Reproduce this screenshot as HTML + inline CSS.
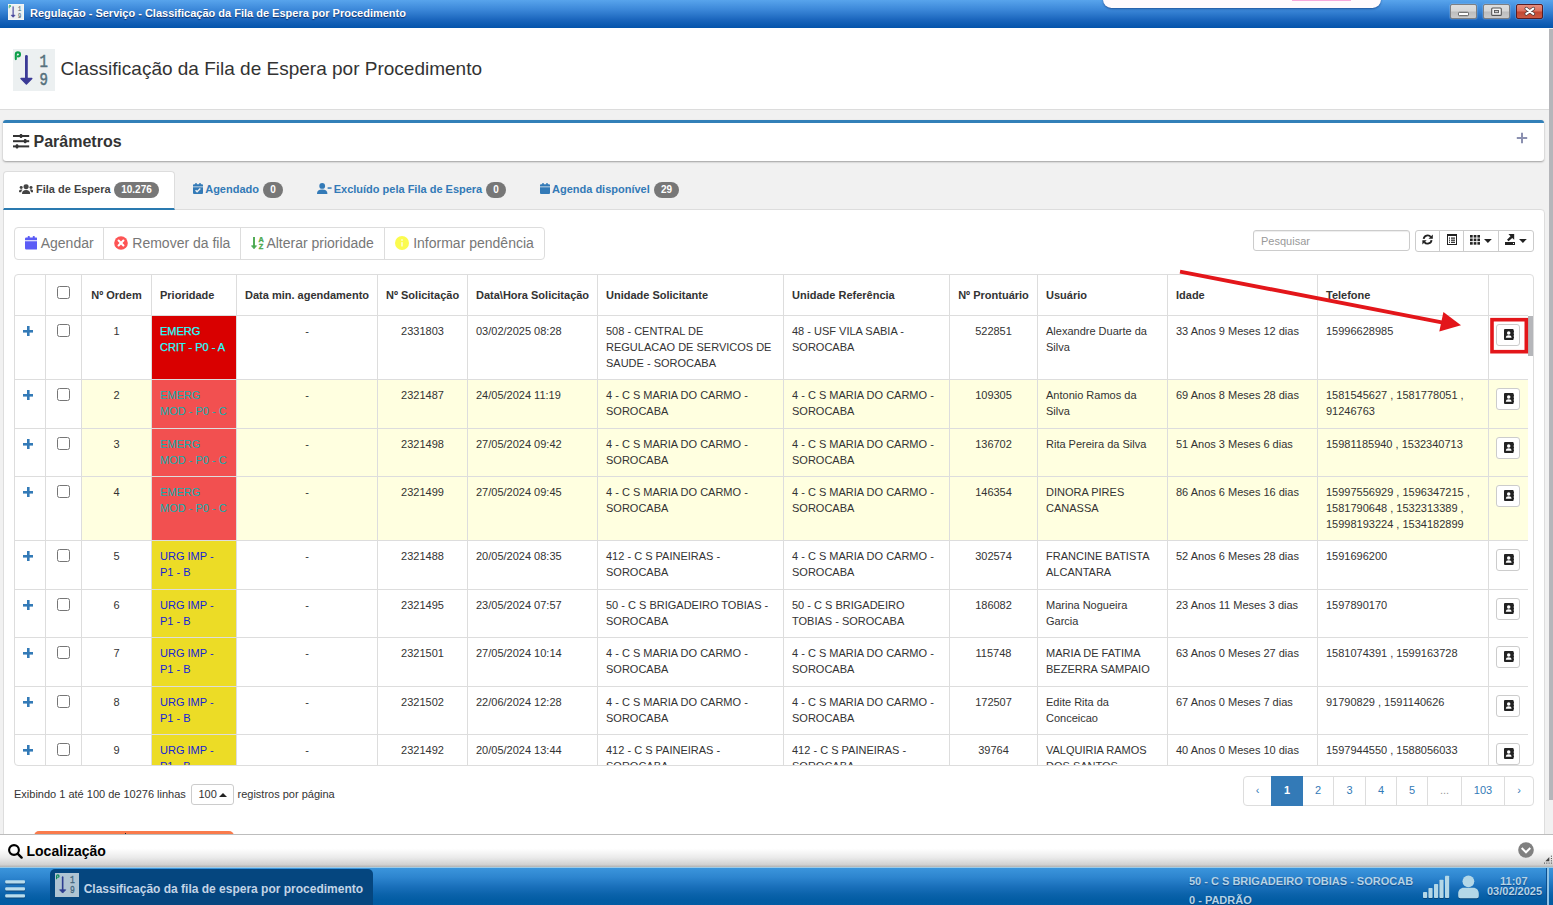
<!DOCTYPE html>
<html lang="pt-BR">
<head>
<meta charset="utf-8">
<title>Regulação - Serviço - Classificação da Fila de Espera por Procedimento</title>
<style>
*{box-sizing:border-box;}
html,body{margin:0;padding:0;}
body{width:1553px;height:905px;overflow:hidden;position:relative;background:#f1f1f1;font-family:"Liberation Sans",Arial,sans-serif;font-size:11px;line-height:1.42857;color:#333;}
.abs{position:absolute;}
i{font-style:normal;display:inline-block;}
/* window title bar */
#titlebar{left:0;top:0;width:1553px;height:28px;background:linear-gradient(#58a4ec 0%,#3b87d8 35%,#1b66bd 70%,#0454ab 100%);}
#titlebar .ttl{left:30px;top:6px;color:#fff;font-weight:bold;font-size:11px;line-height:14px;text-shadow:0 1px 1px rgba(0,0,40,.6);white-space:nowrap;}
.wbtn{top:4.200px;width:27px;height:14.500px;border:1px solid #7d7f83;border-radius:2px;background:linear-gradient(#dedede 0%,#d6d6d6 48%,#bdbdbd 52%,#cacaca 100%);box-shadow:0 0 0 .6px rgba(255,255,255,.22);}
.wbtn.close{border-color:#5a1c22;background:linear-gradient(#e58e7e 0%,#db705d 48%,#c2452f 52%,#cb5a44 100%);}
/* page header */
#header{left:0;top:28px;width:1549px;height:82px;background:#fff;border-bottom:1px solid #dcdcdc;}
#header h1{position:absolute;left:60.6px;top:29px;margin:0;font-weight:normal;font-size:19px;line-height:24px;color:#333;white-space:nowrap;}
#hicon{left:13px;top:21px;width:42px;height:42px;background:#ecf0f1;}
#vscroll{left:1549px;top:29px;width:4px;height:771px;background:#b5b6ba;}
/* parametros panel */
#params{left:3px;top:120px;width:1541px;height:41px;background:#fff;border-top:3px solid #3280b8;border-radius:3px;box-shadow:0 1px 2px rgba(0,0,0,.35);}
#params .t{left:30.500px;top:9px;font-size:16px;font-weight:bold;line-height:20px;color:#333;}
#params .pl{left:1512px;top:4px;font-size:18px;line-height:20px;color:#8a8fb5;}
/* tabs */
.tab{z-index:2;top:171px;height:39px;font-size:11px;font-weight:bold;color:#337ab7;white-space:nowrap;line-height:16px;padding-top:11px;}
.tab.active{left:3px;width:172px;background:#fff;border:1px solid #ddd;border-bottom:2px solid #2a7ab0;border-radius:4px 4px 0 0;color:#444;padding-top:9px;}
.badge{position:absolute;top:11px;height:16px;background:#777;color:#fff;border-radius:8px;font-size:10px;font-weight:bold;line-height:16px;text-align:center;}
.tab svg{position:absolute;}
.tab span.l{position:absolute;top:10px;}
/* content */
#content{left:3px;top:209px;width:1542px;height:626px;background:#fff;border:1px solid #ddd;border-radius:0 4px 0 0;}
/* toolbar */
#tb{left:14px;top:227px;width:531px;height:33px;border:1px solid #ddd;border-radius:4px;background:#fff;}
#tb span{position:absolute;top:0;height:31px;font-size:14px;line-height:30px;color:#777;white-space:nowrap;}
#tb b{position:absolute;top:0;width:1px;height:31px;background:#ddd;}
#tb svg{position:absolute;}
#search{left:1253px;top:230px;width:157px;height:21px;border:1px solid #ccc;border-radius:3px;box-shadow:inset 0 1px 1px rgba(0,0,0,.075);font-size:11px;line-height:20px;color:#999;padding-left:7px;background:#fff;}
#tools{left:1415px;top:230px;width:119px;height:22px;border:1px solid #ccc;border-radius:3px;background:#fff;}
#tools b{position:absolute;top:0;width:1px;height:20px;background:#ccc;}
#tools svg{position:absolute;}
/* table */
#tw{left:14px;top:274px;width:1520px;height:492px;border:1px solid #ddd;border-radius:4px;overflow:hidden;background:#fff;}
table{border-collapse:separate;border-spacing:0;table-layout:fixed;width:1513px;position:absolute;left:0;top:0;}
th,td{border-left:1px solid #ddd;border-top:1px solid #ddd;padding:7px 8px 5px;line-height:16px;vertical-align:top;text-align:left;overflow:hidden;}
th:first-child,td:first-child{border-left:0;}
thead th{border-top:0;height:40px;font-weight:bold;padding:0 8px;line-height:40px;white-space:nowrap;vertical-align:middle;}
td.c,th.c{text-align:center;}
tr.y td{background:#ffffe0;}
tr.y td.w{background:#fff;}
td.p0a{background:#d90000 !important;color:#2ff;-webkit-text-stroke:.250px #2ff;}
td.p0c{background:#f25050 !important;color:#0dafaf;}
td.p1b{background:#ecdc26 !important;color:#1323d9;}
td.b{padding:8px 0 0 7px;}
.ab{width:24px;height:22px;border:1px solid #ccc;border-radius:3px;background:#fff;position:relative;}
.ab svg{position:absolute;left:6.500px;top:4px;}
.cb{width:13px;height:13px;border:1px solid #767676;border-radius:2.500px;background:#fff;position:relative;top:1px;}
.plus{width:10px;height:10px;position:relative;top:1.3px;background:linear-gradient(#337ab7,#337ab7) center/10px 2.6px no-repeat,linear-gradient(#337ab7,#337ab7) center/2.6px 10px no-repeat;}
/* footer */
#finfo{left:14px;top:785.5px;font-size:11px;line-height:16px;white-space:nowrap;}
#psize{left:191px;top:784px;width:43px;height:21px;border:1px solid #ccc;border-radius:3px;background:#fff;font-size:11px;line-height:19px;padding-left:6.500px;}
#finfo2{left:237.5px;top:785.5px;font-size:11px;line-height:16px;white-space:nowrap;}
#pag{left:1243px;top:776px;height:30px;display:flex;border:1px solid #ddd;border-radius:4px;background:#fff;}
#pag div{height:28px;line-height:27px;text-align:center;color:#337ab7;font-size:11px;}
#pag div.br{border-right:1px solid #ddd;}
#pag div.on{background:#337ab7;color:#fff;font-weight:bold;height:30px;margin-top:-1px;line-height:29px;}
#orange{left:33.5px;top:830.6px;width:200.5px;height:10px;background:#f97b4c;border-radius:5px 5px 0 0;}
/* localizacao */
#loc{left:0;top:834px;width:1553px;height:33px;border-top:1px solid #bdbdbd;background:linear-gradient(#fff 0%,#fff 42%,#ebebeb 70%,#d2d2d2 92%,#b2b2b2 100%);}
#loc .t{left:26.5px;top:8.3px;font-size:14px;font-weight:bold;line-height:16px;color:#000;}
#loc svg{position:absolute;}
/* taskbar */
#task{left:0;top:867px;width:1553px;height:38px;background:linear-gradient(#3b95dc 0%,#2d85cf 25%,#1a70bb 50%,#0a62aa 72%,#025ca3 88%,#015ba2 100%);border-top:1px solid #9ccbe8;overflow:hidden;}
#task svg{position:absolute;}
#task .r{color:#b5d3e6;font-size:11px;font-weight:bold;white-space:nowrap;line-height:14px;text-shadow:0 1px 1px rgba(0,30,80,.5);}
#tbtn{left:50px;top:1px;width:323px;height:40px;background:#05467f;border-radius:5px;}
#tbtn .t{left:33.7px;top:12px;color:#c3d4e6;font-size:12px;font-weight:bold;line-height:16px;white-space:nowrap;}
</style>
</head>
<body>
<svg width="0" height="0" style="position:absolute"><defs>
<g id="abk"><path d="M1 0h7.6a1 1 0 0 1 1 1v9a1 1 0 0 1-1 1H1a1 1 0 0 1-1-1V1a1 1 0 0 1 1-1z" fill="#222"/><circle cx="4.7" cy="3.9" r="1.75" fill="#fff"/><path d="M1.8 8.7c0-1.7 1.2-2.5 2.9-2.5s2.9.8 2.9 2.5z" fill="#fff"/><rect x="9.1" y="1.6" width="1.2" height="1.9" rx=".4" fill="#222"/><rect x="9.1" y="4.5" width="1.2" height="1.9" rx=".4" fill="#222"/><rect x="9.1" y="7.4" width="1.2" height="1.9" rx=".4" fill="#222"/></g>
<g id="s19"><rect width="42" height="42" fill="#ecf0f1"/><path d="M2.800 10.100V5.500a2.100 2.100 0 0 1 4.200 0c0 1.200-.8 1.900-2 1.900" fill="none" stroke="#0c9f49" stroke-width="2.1" stroke-linecap="round" stroke-linejoin="round"/><path d="M13.4 7.300V30" stroke="#3b3a96" stroke-width="2.800" stroke-linecap="round"/><path d="M8 29.400h10.800l-5.400 5.700z" fill="#3b3a96" stroke="#3b3a96" stroke-width="1.400" stroke-linejoin="round"/><g transform="matrix(.8 0 0 1 6.1 0)" font-family="Liberation Mono, monospace" font-size="17.500" fill="#56707c" stroke="#56707c" stroke-width=".550" text-anchor="middle"><text x="30.600" y="17.700">1</text><text x="30.600" y="35.800">9</text></g></g>
<g id="cal"><path d="M0 3.4V2.2a1 1 0 0 1 1-1h1.2V.5a.5.5 0 0 1 .5-.5h.6a.5.5 0 0 1 .5.5v.7h2.4V.5a.5.5 0 0 1 .5-.5h.6a.5.5 0 0 1 .5.5v.7H9a1 1 0 0 1 1 1v1.2zM0 4.2h10V10a1 1 0 0 1-1 1H1a1 1 0 0 1-1-1z"/></g>
</defs></svg>
<div id="titlebar" class="abs">
  <svg class="abs" style="left:8px;top:4px" width="16" height="16" viewBox="0 0 42 42"><use href="#s19"/><rect x=".8" y=".8" width="40.4" height="40.4" fill="none" stroke="#fff" stroke-opacity=".55" stroke-width="1.6"/></svg>
  <div class="ttl abs">Regulação - Serviço - Classificação da Fila de Espera por Procedimento</div>
  <div class="abs" style="left:1103px;top:-9px;width:278px;height:17px;border-radius:9px;background:#fffafd;box-shadow:0 1px 2px rgba(0,20,80,.45)"></div>
  <div class="abs" style="left:1292px;top:0;width:59px;height:1px;background:#f8a9dc"></div>
  <div class="wbtn abs" style="left:1450.200px"><svg class="abs" style="left:0;top:0" width="26" height="13" viewBox="0 0 26 13"><rect x="7.5" y="7.3" width="10" height="3.4" rx="1" fill="#fff" stroke="#555" stroke-width="1"/></svg></div>
  <div class="wbtn abs" style="left:1483.200px"><svg class="abs" style="left:0;top:0" width="26" height="13" viewBox="0 0 26 13"><rect x="7.7" y="3" width="9.6" height="7.4" rx="1" fill="#f4f4f4" stroke="#555" stroke-width="1.1"/><rect x="10.5" y="5.5" width="4" height="2.2" fill="#ccc" stroke="#555" stroke-width=".9"/></svg></div>
  <div class="wbtn close abs" style="left:1516.400px"><svg class="abs" style="left:0;top:0" width="26" height="13" viewBox="0 0 26 13"><path d="M9.3 3.700l7 5.200M16.300 3.700l-7 5.200" stroke="#4a3a3a" stroke-width="3.500" stroke-linecap="round"/><path d="M9.300 3.700l7 5.200M16.300 3.700l-7 5.200" stroke="#fff" stroke-width="2.100" stroke-linecap="round"/></svg></div>
</div>
<div id="header" class="abs">
  <svg id="hicon" class="abs" width="42" height="42" viewBox="0 0 42 42"><use href="#s19"/></svg>
  <h1>Classificação da Fila de Espera por Procedimento</h1>
</div>
<div id="vscroll" class="abs"></div>
<div id="params" class="abs">
  <svg class="abs" style="left:10px;top:10px" width="17" height="16" viewBox="0 0 17 16"><g fill="#333"><rect x="0" y="2" width="16.2" height="2"/><rect x="0" y="7.2" width="16.2" height="2"/><rect x="0" y="12.4" width="16.2" height="2"/><rect x="6.700" y=".9" width="2.600" height="4.200" rx="1"/><rect x="10.900" y="6.100" width="2.600" height="4.200" rx="1"/><rect x="2.700" y="11.300" width="2.600" height="4.200" rx="1"/></g></svg>
  <div class="t abs">Parâmetros</div>
  <svg class="abs" style="left:1512.600px;top:9.300px" width="12" height="12" viewBox="0 0 12 12"><path d="M6 .8v10.400M.8 6h10.400" stroke="#8b90b0" stroke-width="2"/></svg>
</div>
<div class="tab active abs">
  <svg style="left:15px;top:12px" width="14.200" height="10" viewBox="0 0 15 11" preserveAspectRatio="none"><g fill="#444"><circle cx="7.5" cy="3" r="2.7"/><path d="M3.2 10.6c0-2.6 1.6-4 4.3-4s4.3 1.4 4.3 4a.4.4 0 0 1-.4.4H3.6a.4.4 0 0 1-.4-.4z"/><circle cx="2.3" cy="3.9" r="1.6"/><circle cx="12.7" cy="3.9" r="1.6"/><path d="M0 8.3c0-1.4.8-2.3 2.3-2.3.6 0 1.100.1 1.500.4-.9.700-1.4 1.600-1.5 2.600H.4a.4.4 0 0 1-.4-.4z"/><path d="M15 8.300c0-1.400-.8-2.300-2.300-2.300-.6 0-1.100.1-1.500.4.9.7 1.4 1.6 1.5 2.600h1.900a.4.4 0 0 0 .4-.4z"/></g></svg>
  <span class="l" style="left:32px;top:9px">Fila de Espera</span><span class="badge" style="left:110px;width:45px;top:10px">10.276</span>
</div>
<div class="tab abs" style="left:0;width:700px;pointer-events:none">
  <svg style="left:193px;top:12px" width="10" height="11" viewBox="0 0 10 11" fill="#337ab7"><use href="#cal"/><path d="M2.6 7.200l1.5 1.5 3.200-3.1" fill="none" stroke="#f1f1f1" stroke-width="1.4"/></svg>
  <span class="l" style="left:205.200px;top:10px">Agendado</span><span class="badge" style="left:263px;width:20px">0</span>
  <svg style="left:317px;top:12px" width="15" height="11" viewBox="0 0 15 11" fill="#337ab7"><circle cx="5.2" cy="2.9" r="2.9"/><path d="M0 10.500c0-2.8 1.800-4.1 5.200-4.100s5.2 1.3 5.2 4.100a.500.5 0 0 1-.5.500H.5a.5.5 0 0 1-.5-.5z"/><rect x="10.6" y="4.3" width="4" height="1.5"/></svg>
  <span class="l" style="left:333.700px;top:10px">Excluído pela Fila de Espera</span><span class="badge" style="left:486px;width:20px">0</span>
  <svg style="left:539.500px;top:12px" width="10" height="11" viewBox="0 0 10 11" fill="#337ab7"><use href="#cal"/></svg>
  <span class="l" style="left:552px;top:10px">Agenda disponível</span><span class="badge" style="left:654px;width:25px">29</span>
</div>
<div id="content" class="abs"></div>
<div id="tb" class="abs">
  <svg style="left:9.800px;top:8.300px" width="12.500" height="13.500" viewBox="0 0 10 11" fill="#5b5cf6" preserveAspectRatio="none"><use href="#cal"/></svg>
  <span style="left:25.700px">Agendar</span><b style="left:88px"></b>
  <svg style="left:99.400px;top:7.800px" width="14" height="14" viewBox="0 0 14 14"><circle cx="7" cy="7" r="6.800" fill="#fd5454"/><path d="M4.6 4.600l4.8 4.800M9.4 4.600l-4.8 4.8" stroke="#fff" stroke-width="2.1" stroke-linecap="round"/></svg>
  <span style="left:117.300px">Remover da fila</span><b style="left:225px"></b>
  <svg style="left:236px;top:8.500px" width="14" height="13" viewBox="0 0 14 13"><path d="M3 .6v9" stroke="#4aa84f" stroke-width="1.900" stroke-linecap="round"/><path d="M.5 8.800h5l-2.500 3z" fill="#4aa84f" stroke="#4aa84f" stroke-width=".800" stroke-linejoin="round"/><text x="10.050" y="5.300" text-anchor="middle" font-family="Liberation Sans, sans-serif" font-weight="bold" font-size="7.300" fill="#4aa84f" stroke="#4aa84f" stroke-width=".350">A</text><text x="10" y="12.300" text-anchor="middle" font-family="Liberation Sans, sans-serif" font-weight="bold" font-size="7.300" fill="#4aa84f" stroke="#4aa84f" stroke-width=".350">Z</text></svg>
  <span style="left:251.400px">Alterar prioridade</span><b style="left:369px"></b>
  <svg style="left:380px;top:7.800px" width="14" height="14" viewBox="0 0 14 14"><circle cx="7" cy="7" r="7" fill="#fbfb4e"/><circle cx="7" cy="3.9" r="1" fill="#fdfdc0"/><rect x="6.1" y="5.9" width="1.8" height="4.6" rx=".6" fill="#fdfdc0"/></svg>
  <span style="left:398.200px">Informar pendência</span>
</div>
<div id="search" class="abs">Pesquisar</div>
<div id="tools" class="abs">
  <svg style="left:6px;top:3px" width="11.2" height="11" viewBox="0 0 12 12"><path d="M1.7 5.400A4.400 4.400 0 0 1 9.500 3.100M10.300 6.600A4.400 4.400 0 0 1 2.500 8.900" fill="none" stroke="#222" stroke-width="2"/><path d="M11.700.500v4.700H7zM.300 11.500V6.800H5z" fill="#222"/></svg>
  <b style="left:23px"></b>
  <svg style="left:31px;top:3px" width="10" height="11" viewBox="0 0 10 11"><rect x=".5" y=".5" width="9" height="10" fill="#fff" stroke="#222" stroke-width="1"/><rect x="0" y="0" width="10" height="2" fill="#222"/><g fill="#222"><rect x="2" y="3.500" width="1" height="1.200"/><rect x="4" y="3.500" width="4" height="1.200"/><rect x="2" y="5.600" width="1" height="1.200"/><rect x="4" y="5.600" width="4" height="1.200"/><rect x="2" y="7.700" width="1" height="1.200"/><rect x="4" y="7.700" width="4" height="1.200"/></g></svg>
  <b style="left:47px"></b>
  <svg style="left:54px;top:4.200px" width="10.100" height="9.700" viewBox="0 0 10.100 9.700" fill="#222"><rect x="0" y="0" width="2.700" height="2.600"/><rect x="3.700" y="0" width="2.700" height="2.600"/><rect x="7.400" y="0" width="2.700" height="2.600"/><rect x="0" y="3.550" width="2.700" height="2.600"/><rect x="3.700" y="3.550" width="2.700" height="2.600"/><rect x="7.400" y="3.550" width="2.700" height="2.600"/><rect x="0" y="7.100" width="2.700" height="2.600"/><rect x="3.700" y="7.100" width="2.700" height="2.600"/><rect x="7.400" y="7.100" width="2.700" height="2.600"/></svg>
  <svg style="left:68.100px;top:8.200px" width="7.800" height="3.900" viewBox="0 0 8 4"><path d="M0 0h8L4 4z" fill="#222"/></svg>
  <b style="left:82px"></b>
  <svg style="left:89px;top:3px" width="10.100" height="11" viewBox="0 0 10.100 11" fill="#222"><rect x="0" y="8" width="10.100" height="3"/><rect x="8" y="9" width="1" height="1" fill="#fff"/><path d="M3.400 0h5.800v5.800L7.200 3.900 3.600 7.300 2 5.700l3.500-3.500z"/></svg>
  <svg style="left:103.100px;top:8.200px" width="7.800" height="3.900" viewBox="0 0 8 4"><path d="M0 0h8L4 4z" fill="#222"/></svg>
</div>
<div id="tw" class="abs">
<table>
<colgroup><col style="width:30px"><col style="width:36px"><col style="width:70px"><col style="width:85px"><col style="width:141px"><col style="width:90px"><col style="width:130px"><col style="width:186px"><col style="width:166px"><col style="width:88px"><col style="width:130px"><col style="width:150px"><col style="width:171px"><col style="width:40px"></colgroup>
<thead><tr><th></th><th class="c" style="line-height:normal;padding:0"><i class="cb" style="margin-top:-3px;top:0"></i></th><th class="c">Nº Ordem</th><th>Prioridade</th><th class="c">Data min. agendamento</th><th class="c">Nº Solicitação</th><th>Data\Hora Solicitação</th><th>Unidade Solicitante</th><th>Unidade Referência</th><th class="c">Nº Prontuário</th><th>Usuário</th><th>Idade</th><th>Telefone</th><th></th></tr></thead>
<tbody>
<tr style="height:64px"><td class="w"><i class="plus"></i></td><td class="w c"><i class="cb"></i></td><td class="c">1</td><td class="p0a">EMERG CRIT - P0 - A</td><td class="c">-</td><td class="c">2331803</td><td>03/02/2025 08:28</td><td>508 - CENTRAL DE REGULACAO DE SERVICOS DE SAUDE - SOROCABA</td><td>48 - USF VILA SABIA - SOROCABA</td><td class="c">522851</td><td>Alexandre Duarte da Silva</td><td>33 Anos 9 Meses 12 dias</td><td>15996628985</td><td class="b"><i class="ab"><svg viewBox="0 0 10 11" width="10" height="11"><use href="#abk"/></svg></i></td></tr>
<tr class="y" style="height:49px"><td class="w"><i class="plus"></i></td><td class="w c"><i class="cb"></i></td><td class="c">2</td><td class="p0c">EMERG MOD - P0 - C</td><td class="c">-</td><td class="c">2321487</td><td>24/05/2024 11:19</td><td>4 - C S MARIA DO CARMO - SOROCABA</td><td>4 - C S MARIA DO CARMO - SOROCABA</td><td class="c">109305</td><td>Antonio Ramos da Silva</td><td>69 Anos 8 Meses 28 dias</td><td>1581545627 , 1581778051 , 91246763</td><td class="b"><i class="ab"><svg viewBox="0 0 10 11" width="10" height="11"><use href="#abk"/></svg></i></td></tr>
<tr class="y" style="height:48px"><td class="w"><i class="plus"></i></td><td class="w c"><i class="cb"></i></td><td class="c">3</td><td class="p0c">EMERG MOD - P0 - C</td><td class="c">-</td><td class="c">2321498</td><td>27/05/2024 09:42</td><td>4 - C S MARIA DO CARMO - SOROCABA</td><td>4 - C S MARIA DO CARMO - SOROCABA</td><td class="c">136702</td><td>Rita Pereira da Silva</td><td>51 Anos 3 Meses 6 dias</td><td>15981185940 , 1532340713</td><td class="b"><i class="ab"><svg viewBox="0 0 10 11" width="10" height="11"><use href="#abk"/></svg></i></td></tr>
<tr class="y" style="height:64px"><td class="w"><i class="plus"></i></td><td class="w c"><i class="cb"></i></td><td class="c">4</td><td class="p0c">EMERG MOD - P0 - C</td><td class="c">-</td><td class="c">2321499</td><td>27/05/2024 09:45</td><td>4 - C S MARIA DO CARMO - SOROCABA</td><td>4 - C S MARIA DO CARMO - SOROCABA</td><td class="c">146354</td><td>DINORA PIRES CANASSA</td><td>86 Anos 6 Meses 16 dias</td><td>15997556929 , 1596347215 , 1581790648 , 1532313389 , 15998193224 , 1534182899</td><td class="b"><i class="ab"><svg viewBox="0 0 10 11" width="10" height="11"><use href="#abk"/></svg></i></td></tr>
<tr style="height:49px"><td class="w"><i class="plus"></i></td><td class="w c"><i class="cb"></i></td><td class="c">5</td><td class="p1b">URG IMP - P1 - B</td><td class="c">-</td><td class="c">2321488</td><td>20/05/2024 08:35</td><td>412 - C S PAINEIRAS - SOROCABA</td><td>4 - C S MARIA DO CARMO - SOROCABA</td><td class="c">302574</td><td>FRANCINE BATISTA ALCANTARA</td><td>52 Anos 6 Meses 28 dias</td><td>1591696200</td><td class="b"><i class="ab"><svg viewBox="0 0 10 11" width="10" height="11"><use href="#abk"/></svg></i></td></tr>
<tr style="height:48px"><td class="w"><i class="plus"></i></td><td class="w c"><i class="cb"></i></td><td class="c">6</td><td class="p1b">URG IMP - P1 - B</td><td class="c">-</td><td class="c">2321495</td><td>23/05/2024 07:57</td><td>50 - C S BRIGADEIRO TOBIAS - SOROCABA</td><td>50 - C S BRIGADEIRO TOBIAS - SOROCABA</td><td class="c">186082</td><td>Marina Nogueira Garcia</td><td>23 Anos 11 Meses 3 dias</td><td>1597890170</td><td class="b"><i class="ab"><svg viewBox="0 0 10 11" width="10" height="11"><use href="#abk"/></svg></i></td></tr>
<tr style="height:49px"><td class="w"><i class="plus"></i></td><td class="w c"><i class="cb"></i></td><td class="c">7</td><td class="p1b">URG IMP - P1 - B</td><td class="c">-</td><td class="c">2321501</td><td>27/05/2024 10:14</td><td>4 - C S MARIA DO CARMO - SOROCABA</td><td>4 - C S MARIA DO CARMO - SOROCABA</td><td class="c">115748</td><td>MARIA DE FATIMA BEZERRA SAMPAIO</td><td>63 Anos 0 Meses 27 dias</td><td>1581074391 , 1599163728</td><td class="b"><i class="ab"><svg viewBox="0 0 10 11" width="10" height="11"><use href="#abk"/></svg></i></td></tr>
<tr style="height:48px"><td class="w"><i class="plus"></i></td><td class="w c"><i class="cb"></i></td><td class="c">8</td><td class="p1b">URG IMP - P1 - B</td><td class="c">-</td><td class="c">2321502</td><td>22/06/2024 12:28</td><td>4 - C S MARIA DO CARMO - SOROCABA</td><td>4 - C S MARIA DO CARMO - SOROCABA</td><td class="c">172507</td><td>Edite Rita da Conceicao</td><td>67 Anos 0 Meses 7 dias</td><td>91790829 , 1591140626</td><td class="b"><i class="ab"><svg viewBox="0 0 10 11" width="10" height="11"><use href="#abk"/></svg></i></td></tr>
<tr style="height:49px"><td class="w"><i class="plus"></i></td><td class="w c"><i class="cb"></i></td><td class="c">9</td><td class="p1b">URG IMP - P1 - B</td><td class="c">-</td><td class="c">2321492</td><td>20/05/2024 13:44</td><td>412 - C S PAINEIRAS - SOROCABA</td><td>412 - C S PAINEIRAS - SOROCABA</td><td class="c">39764</td><td>VALQUIRIA RAMOS DOS SANTOS</td><td>40 Anos 0 Meses 10 dias</td><td>1597944550 , 1588056033</td><td class="b"><i class="ab"><svg viewBox="0 0 10 11" width="10" height="11"><use href="#abk"/></svg></i></td></tr></tbody>
</table>
<div class="abs" style="left:1513px;top:41px;width:5px;height:40px;background:#b5b6ba"></div>
</div>
<svg class="abs" style="left:0;top:0" width="1553" height="905" viewBox="0 0 1553 905"><line x1="1180" y1="271.6" x2="1443" y2="322.6" stroke="#e3161a" stroke-width="3.8"/><polygon points="1443.4,312.1 1461,325.2 1439.3,331.4" fill="#e3161a"/><rect x="1492" y="319.7" width="34.3" height="32" fill="none" stroke="#e3161a" stroke-width="3.6"/></svg>
<div id="finfo" class="abs">Exibindo 1 até 100 de 10276 linhas</div>
<div id="psize" class="abs">100<svg class="abs" style="left:26.500px;top:8px" width="8" height="4" viewBox="0 0 8 4"><path d="M0 4h8L4 0z" fill="#222"/></svg></div>
<div id="finfo2" class="abs">registros por página</div>
<div id="pag" class="abs"><div style="width:27px">‹</div><div class="on" style="width:32px">1</div><div class="br" style="width:31px">2</div><div class="br" style="width:32px">3</div><div class="br" style="width:31px">4</div><div class="br" style="width:31px">5</div><div class="br" style="width:34px;color:#999">...</div><div class="br" style="width:43px">103</div><div style="width:28px">›</div></div>
<div id="orange" class="abs"></div>
<div class="abs" style="left:124.5px;top:832.6px;width:1.3px;height:1.4px;background:#222"></div>
<div id="loc" class="abs">
  <svg style="left:8px;top:9px" width="15" height="15" viewBox="0 0 15 15"><circle cx="6" cy="6" r="4.9" fill="none" stroke="#000" stroke-width="2.1"/><path d="M9.6 9.600l4 4" stroke="#000" stroke-width="2.4" stroke-linecap="round"/></svg>
  <div class="t abs">Localização</div>
  <svg style="left:1518px;top:7px" width="16" height="16" viewBox="0 0 16 16"><circle cx="8" cy="8" r="7.8" fill="#808080"/><path d="M3.7 6l4.3 4.300L12.3 6" fill="none" stroke="#fff" stroke-width="2"/></svg>
  <svg style="left:1544px;top:20px" width="9" height="9" viewBox="0 0 9 9" fill="#444"><path d="M1.3 6.300L5.3 2v4.300z"/><rect x="0" y="7.6" width="1" height="1"/><rect x="2.3" y="7.6" width="1" height="1"/><rect x="4.6" y="7.6" width="1" height="1"/><rect x="6.9" y="7.6" width="1" height="1"/><rect x="6.9" y="5.3" width="1" height="1"/><rect x="6.9" y="3" width="1" height="1"/><rect x="6.9" y=".7" width="1" height="1"/></svg>
</div>
<div id="task" class="abs">
  <svg style="left:5px;top:12px" width="21" height="19" viewBox="0 0 21 19"><g fill="#0a3a66" opacity=".7"><rect x=".3" y="1.200" width="19.800" height="3.300" rx="1"/><rect x=".3" y="8.200" width="19.800" height="3.300" rx="1"/><rect x=".3" y="15.200" width="19.800" height="3.300" rx="1"/></g><g fill="#b9dcec"><rect x=".2" y=".2" width="19.800" height="3.200" rx="1"/><rect x=".2" y="7.200" width="19.800" height="3.200" rx="1"/><rect x=".2" y="14.200" width="19.800" height="3.200" rx="1"/></g></svg>
  <div id="tbtn" class="abs">
    <svg style="left:5px;top:4px;opacity:.74" width="24" height="24" viewBox="0 0 42 42"><use href="#s19"/></svg>
    <div class="t abs">Classificação da fila de espera por procedimento</div>
  </div>
  <div class="r abs" style="left:1189px;top:6px">50 - C S BRIGADEIRO TOBIAS - SOROCAB</div>
  <div class="r abs" style="left:1189px;top:25px">0 - PADRÃO</div>
  <svg style="left:1423px;top:7px" width="27" height="25" viewBox="0 0 27 25"><g fill="#062f55" opacity=".55"><rect x="0" y="17.700" width="4.200" height="6.400" rx=".8"/><rect x="5.400" y="13.800" width="4.200" height="10.300" rx=".8"/><rect x="11" y="9.900" width="4.200" height="14.200" rx=".8"/><rect x="16.400" y="5.600" width="4.200" height="18.500" rx=".8"/><rect x="22" y="1.500" width="4.200" height="22.600" rx=".8"/></g><g fill="#b3d7e7"><rect x="0" y="16.900" width="4.200" height="6.100" rx=".8"/><rect x="5.400" y="13" width="4.200" height="10" rx=".8"/><rect x="11" y="9.100" width="4.200" height="13.900" rx=".8"/><rect x="16.400" y="4.800" width="4.200" height="18.200" rx=".8"/><rect x="22" y=".7" width="4.200" height="22.300" rx=".8"/></g></svg>
  <svg style="left:1458px;top:7px" width="21" height="26" viewBox="0 0 21 26"><g fill="#062f55" opacity=".55"><path d="M.2 22.300v-2.800c0-3.200 2.400-5.600 5.600-5.600h9.400c3.200 0 5.600 2.400 5.600 5.600v2.800a2 2 0 0 1-2 2H2.200a2 2 0 0 1-2-2z"/></g><g fill="#b3d7e7"><circle cx="10.400" cy="6.300" r="5.900"/><path d="M.2 21.200v-2.800c0-3.200 2.400-5.600 5.600-5.600h9.400c3.200 0 5.600 2.400 5.600 5.600v2.800a2 2 0 0 1-2 2H2.200a2 2 0 0 1-2-2z"/></g></svg>
  <div class="r abs" style="left:1500px;top:6px">11:07</div>
  <div class="r abs" style="left:1487px;top:16px">03/02/2025</div>
  <div class="abs" style="left:1546px;top:0;width:1px;height:38px;background:#0b4e8e"></div>
  <div class="abs" style="left:1547px;top:0;width:1.500px;height:38px;background:#8fc3e6"></div>
</div>
</body>
</html>
